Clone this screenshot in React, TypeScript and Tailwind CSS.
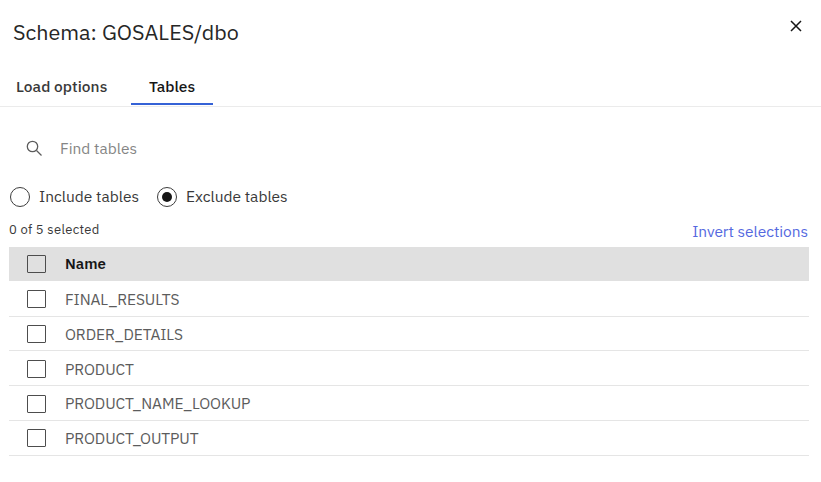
import React, { useState } from "react";

const tables = ["FINAL_RESULTS", "ORDER_DETAILS", "PRODUCT", "PRODUCT_NAME_LOOKUP", "PRODUCT_OUTPUT"];

const Checkbox = () => (
  <span className="ml-[18px] mr-[19px] block h-[18px] w-[19px] shrink-0 rounded-[1px] border border-[#4d4d4d]" />
);

const Radio = ({ checked }: { checked: boolean }) => (
  <span className="flex h-5 w-5 shrink-0 items-center justify-center rounded-full border border-[#3d3d3d]">
    {checked && <span className="h-[10px] w-[10px] rounded-full bg-[#161616]" />}
  </span>
);

const App = () => {
  const [mode, setMode] = useState("exclude");

  return (
    <div className="h-[482px] w-[821px] overflow-hidden bg-white font-['IBM_Plex_Sans',Roboto,sans-serif] text-[15.5px] text-[#393939]">
      {/* Header */}
      <div className="flex h-[66px] items-start justify-between pl-[13px] pr-[19px]">
        <h1 className="mt-[18px] whitespace-nowrap text-[21.5px] leading-7 text-[#262626]">
          Schema: GOSALES/dbo
        </h1>
        <button className="mt-5" aria-label="Close">
          <svg width="12" height="12" viewBox="0 0 12 12" fill="none" stroke="#161616" strokeWidth="1.5">
            <path d="M1 1l10 10M11 1L1 11" />
          </svg>
        </button>
      </div>

      {/* Tabs */}
      <div className="flex h-[41px] border-b border-[#ebebeb] text-[15.5px] font-medium leading-5">
        <button className="w-[131px] whitespace-nowrap pl-[16px] text-left tracking-[0.05px]">Load options</button>
        <button className="mb-[1px] w-[82px] border-b-2 border-[#3562d6] pt-[2px] text-center text-[#161616]">
          Tables
        </button>
      </div>

      {/* Search */}
      <div className="flex h-[82px] items-center pl-[26px] text-[#858585]">
        <svg width="17" height="17" viewBox="0 0 17 17" fill="none" stroke="#5c5c5c" strokeWidth="1.3">
          <circle cx="6.5" cy="6.5" r="5.2" />
          <path d="M10.5 10.5l5 5" />
        </svg>
        <span className="ml-[17px] pt-[2px]">Find tables</span>
      </div>

      {/* Include / exclude */}
      <div className="flex h-4 items-center pl-[10px]">
        <button className="flex w-[147px] items-center gap-[9px] whitespace-nowrap" onClick={() => setMode("include")}>
          <Radio checked={mode === "include"} />
          <span>Include tables</span>
        </button>
        <button className="flex items-center gap-[9px] whitespace-nowrap" onClick={() => setMode("exclude")}>
          <Radio checked={mode === "exclude"} />
          <span>Exclude tables</span>
        </button>
      </div>

      <div className="flex h-[42px] items-end justify-between pl-[9px] pr-[13px]">
        <span className="mb-[7px] text-[13px] leading-5 tracking-[0.3px]">0 of 5 selected</span>
        <button className="mb-[6px] leading-5 tracking-[-0.05px] text-[#5569df]">Invert selections</button>
      </div>

      {/* Tables list */}
      <div className="ml-[9px] w-[800px]">
        <div className="flex h-[34px] items-center bg-[#e0e0e0]">
          <Checkbox />
          <span className="text-[15px] font-semibold text-[#161616]">Name</span>
        </div>
        <div className="pt-[0.8px]">
          {tables.map((name) => (
            <div key={name} className="flex h-[34.8px] items-center border-b border-[#e5e5e5] pt-px">
              <Checkbox />
              <span className="pt-px text-[15.5px] tracking-[-0.1px] text-[#5c5c5c]">{name}</span>
            </div>
          ))}
        </div>
      </div>
    </div>
  );
};

export default App;
